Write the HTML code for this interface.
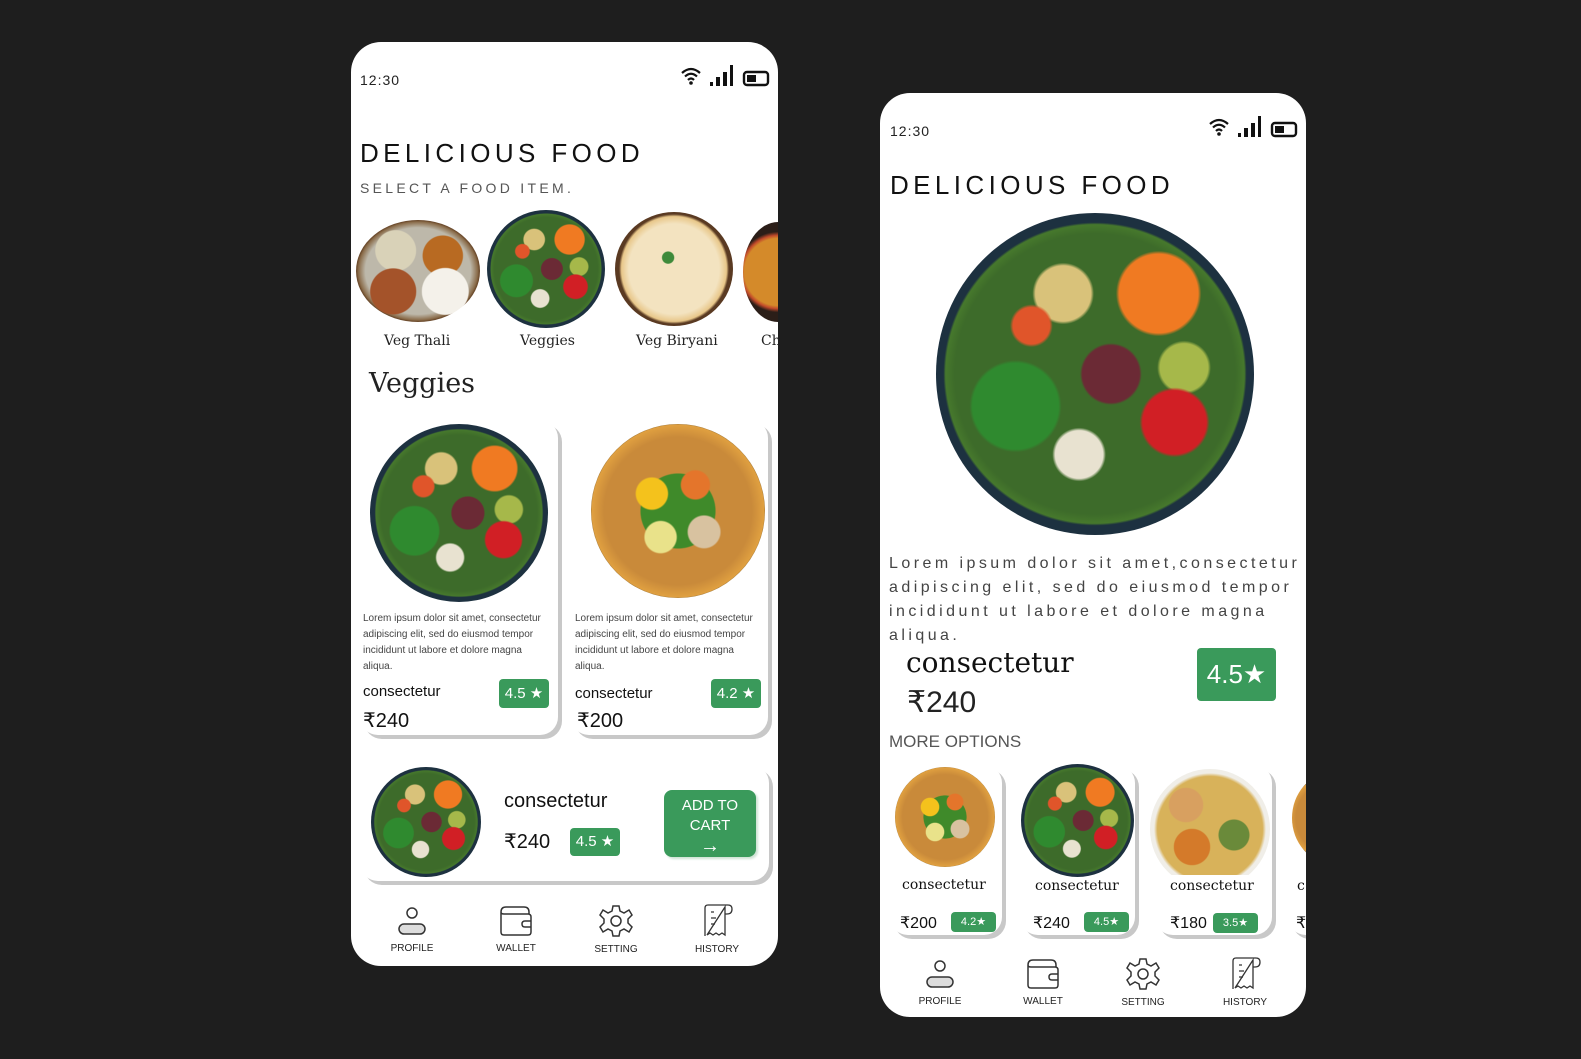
<!DOCTYPE html>
<html><head><meta charset="utf-8"><style>
*{margin:0;padding:0;box-sizing:border-box}
body{width:1581px;height:1059px;background:#1e1e1e;position:relative;overflow:hidden;font-family:"Liberation Sans","DejaVu Sans",sans-serif;color:#111}
.ph{position:absolute;background:#fff;border-radius:30px;overflow:hidden}
.a{position:absolute;white-space:nowrap}
.serif{font-family:"DejaVu Serif","Liberation Serif",serif}
.c{position:absolute;border-radius:50%}
.salad{background:
radial-gradient(circle at 30% 35%,#e0552a 0 6%,transparent 7%),
radial-gradient(circle at 55% 50%,#6b2a35 0 12%,transparent 13%),
radial-gradient(circle at 75% 65%,#d11f25 0 10%,transparent 11%),
radial-gradient(circle at 70% 25%,#f07a22 0 12%,transparent 13%),
radial-gradient(circle at 45% 75%,#e8e2d0 0 8%,transparent 9%),
radial-gradient(circle at 78% 48%,#a6b84a 0 8%,transparent 9%),
radial-gradient(circle at 40% 25%,#d9c27a 0 9%,transparent 10%),
radial-gradient(circle at 25% 60%,#2f8a2f 0 14%,transparent 15%),
radial-gradient(circle,#3d6b2a 0 62%,#46782c 66%,#1d3140 67% 100%)}
.stir{background:
radial-gradient(circle at 35% 40%,#f4c21c 0 10%,transparent 11%),
radial-gradient(circle at 60% 35%,#e4752b 0 9%,transparent 10%),
radial-gradient(circle at 40% 65%,#e9e28a 0 10%,transparent 11%),
radial-gradient(circle at 65% 62%,#d8c2a0 0 10%,transparent 11%),
radial-gradient(circle at 50% 50%,#3f8a2a 0 30%,transparent 31%),
radial-gradient(circle,#c98a3a 0 60%,#e0a040 70%,#2b2b2b 72% 100%)}
.thali{background:
radial-gradient(circle at 72% 70%,#f4f1ea 0 20%,transparent 21%),
radial-gradient(circle at 30% 70%,#a4532a 0 20%,transparent 21%),
radial-gradient(circle at 70% 35%,#b86a22 0 18%,transparent 19%),
radial-gradient(circle at 32% 30%,#d9d2b8 0 18%,transparent 19%),
radial-gradient(ellipse,#bdb8aa 0 60%,#8a6c4a 68%,#6b4a2c 70%)}
.bir{background:
radial-gradient(circle at 45% 40%,#3e8a3a 0 6%,transparent 7%),
radial-gradient(circle,#f3e3c0 0 55%,#e8c78a 64%,#5a3a22 67% 100%)}
.quin{background:
radial-gradient(circle at 30% 30%,#d8a060 0 14%,transparent 15%),
radial-gradient(circle at 70% 55%,#6a8a3a 0 14%,transparent 15%),
radial-gradient(circle at 35% 65%,#d47a2a 0 16%,transparent 17%),
radial-gradient(circle,#d8b25a 0 62%,#f0eee8 66% 100%)}
.noodle{background:radial-gradient(circle,#d48a2a 0 55%,#c24a2a 60%,#2b1e18 66% 100%)}
.card{position:absolute;background:#fff;border-radius:18px;box-shadow:4px 4px 0 #c8c8c8}
.bd{position:absolute;background:#3a9a5b;color:#fff;border-radius:4px;text-align:center}
.nav{position:absolute;width:80px;text-align:center;font-size:10px;color:#222}
.nav svg{display:block;margin:0 auto 6px}
.lor{position:absolute;font-size:10px;line-height:16px;color:#444;white-space:nowrap}
</style></head><body>

<!-- PHONE 1 -->
<div class="ph" style="left:351px;top:42px;width:427px;height:924px">
 <div class="a" style="left:9px;top:30px;font-size:14px;letter-spacing:1px;color:#222">12:30</div>
 <svg class="a" style="left:330px;top:22px" width="92" height="24" viewBox="0 0 92 24">
  <path d="M1 9 Q10 1 19 9" stroke="#111" stroke-width="2.2" fill="none"/><path d="M4 12.5 Q10 7 16 12.5" stroke="#111" stroke-width="2.2" fill="none"/><path d="M7 16 Q10 13 13 16" stroke="#111" stroke-width="2.2" fill="none"/><circle cx="10" cy="19" r="1.8" fill="#111"/>
  <rect x="29" y="18" width="3" height="4" fill="#111"/><rect x="35" y="13" width="4" height="9" fill="#111"/><rect x="42" y="8" width="4" height="14" fill="#111"/><rect x="49" y="1" width="3" height="21" fill="#111"/>
  <rect x="63" y="8" width="24" height="13" rx="3" stroke="#111" stroke-width="2.4" fill="none"/><rect x="66" y="11" width="9" height="7" fill="#111"/>
 </svg>
 <div class="a" style="left:9px;top:96px;font-size:26px;letter-spacing:4.4px;color:#111">DELICIOUS FOOD</div>
 <div class="a" style="left:9px;top:138px;font-size:14px;letter-spacing:3.3px;color:#555">SELECT A FOOD ITEM.</div>

 <div class="c thali" style="left:5px;top:178px;width:124px;height:102px"></div>
 <div class="c salad" style="left:136px;top:168px;width:118px;height:118px"></div>
 <div class="c bir" style="left:264px;top:170px;width:118px;height:114px"></div>
 <div class="c noodle" style="left:392px;top:180px;width:70px;height:100px"></div>
 <div class="a serif" style="left:33px;top:291px;font-size:14px;color:#222">Veg Thali</div>
 <div class="a serif" style="left:169px;top:291px;font-size:14px;color:#222">Veggies</div>
 <div class="a serif" style="left:285px;top:291px;font-size:14px;color:#222">Veg Biryani</div>
 <div class="a serif" style="left:410px;top:291px;font-size:14px;color:#222">Ch</div>
 <div class="a serif" style="left:18px;top:326px;font-size:27px;color:#222">Veggies</div>

 <div class="card" style="left:9px;top:378px;width:198px;height:315px"></div>
 <div class="c salad" style="left:19px;top:382px;width:178px;height:178px"></div>
 <div class="lor" style="left:12px;top:569px">Lorem ipsum dolor sit amet, consectetur<br>adipiscing elit, sed do eiusmod tempor<br>incididunt ut labore et dolore magna<br>aliqua.</div>
 <div class="a" style="left:12px;top:641px;font-size:15px">consectetur</div>
 <div class="a" style="left:12px;top:666px;font-size:20px">₹240</div>
 <div class="bd" style="left:148px;top:637px;width:50px;height:29px;font-size:15px;line-height:29px">4.5 ★</div>

 <div class="card" style="left:220px;top:378px;width:197px;height:315px"></div>
 <div class="c stir" style="left:240px;top:382px;width:174px;height:174px"></div>
 <div class="lor" style="left:224px;top:569px">Lorem ipsum dolor sit amet, consectetur<br>adipiscing elit, sed do eiusmod tempor<br>incididunt ut labore et dolore magna<br>aliqua.</div>
 <div class="a" style="left:224px;top:643px;font-size:15px">consectetur</div>
 <div class="a" style="left:226px;top:666px;font-size:20px">₹200</div>
 <div class="bd" style="left:360px;top:637px;width:50px;height:29px;font-size:15px;line-height:29px">4.2 ★</div>

 <div class="card" style="left:9px;top:723px;width:409px;height:116px"></div>
 <div class="c salad" style="left:20px;top:725px;width:110px;height:110px"></div>
 <div class="a" style="left:153px;top:748px;font-size:20px">consectetur</div>
 <div class="a" style="left:153px;top:787px;font-size:20px">₹240</div>
 <div class="bd" style="left:219px;top:786px;width:50px;height:28px;font-size:15px;line-height:28px">4.5 ★</div>
 <div class="bd" style="left:313px;top:748px;width:92px;height:67px;border-radius:8px;font-size:15px;line-height:20px;padding-top:6px;box-shadow:2px 2px 2px #cfe3d5">ADD TO<br>CART<br><span style="font-size:20px">→</span></div>

 <div class="nav" style="left:21px;top:863px"><svg width="34" height="32" viewBox="0 0 34 32"><circle cx="17" cy="8" r="5" stroke="#333" stroke-width="1.5" fill="none"/><rect x="4" y="19" width="26" height="10" rx="5" fill="#ddd" stroke="#333" stroke-width="1.5"/></svg>PROFILE</div>
 <div class="nav" style="left:125px;top:863px"><svg width="36" height="32" viewBox="0 0 36 32"><path d="M3 7 Q3 2 8 2 H26 Q31 2 31 7 V9 M3 7 V27 Q3 30 6 30 H30 Q33 30 33 27 V12 Q33 9 30 9 H6 Q3 9 3 7" stroke="#333" stroke-width="1.5" fill="none"/><path d="M33 16 H27 Q24 16 24 19 Q24 22 27 22 H33" stroke="#333" stroke-width="1.5" fill="none"/></svg>WALLET</div>
 <div class="nav" style="left:225px;top:862px"><svg width="34" height="34" viewBox="0 0 34 34"><path d="M14 2 H20 L21 7 L25 9 L30 6 L33 11 L29 15 V19 L33 23 L30 28 L25 25 L21 27 L20 32 H14 L13 27 L9 25 L4 28 L1 23 L5 19 V15 L1 11 L4 6 L9 9 L13 7 Z" stroke="#333" stroke-width="1.5" fill="none"/><circle cx="17" cy="17" r="5" stroke="#333" stroke-width="1.5" fill="none"/></svg>SETTING</div>
 <div class="nav" style="left:326px;top:862px"><svg width="34" height="34" viewBox="0 0 34 34"><path d="M5 32 V4 Q5 1 8 1 H28 Q32 1 32 5 Q32 10 27 10 H25 M25 3 V31 L22 29 L19 31 L16 29 L13 31 L10 29 L7 31 Z" stroke="#333" stroke-width="1.3" fill="none"/><path d="M11 8 H14 M11 14 H16 M11 20 H15" stroke="#333" stroke-width="1.3"/></svg>HISTORY</div>
</div>

<!-- PHONE 2 -->
<div class="ph" style="left:880px;top:93px;width:426px;height:924px">
 <div class="a" style="left:10px;top:30px;font-size:14px;letter-spacing:1px;color:#222">12:30</div>
 <svg class="a" style="left:329px;top:22px" width="92" height="24" viewBox="0 0 92 24">
  <path d="M1 9 Q10 1 19 9" stroke="#111" stroke-width="2.2" fill="none"/><path d="M4 12.5 Q10 7 16 12.5" stroke="#111" stroke-width="2.2" fill="none"/><path d="M7 16 Q10 13 13 16" stroke="#111" stroke-width="2.2" fill="none"/><circle cx="10" cy="19" r="1.8" fill="#111"/>
  <rect x="29" y="18" width="3" height="4" fill="#111"/><rect x="35" y="13" width="4" height="9" fill="#111"/><rect x="42" y="8" width="4" height="14" fill="#111"/><rect x="49" y="1" width="3" height="21" fill="#111"/>
  <rect x="63" y="8" width="24" height="13" rx="3" stroke="#111" stroke-width="2.4" fill="none"/><rect x="66" y="11" width="9" height="7" fill="#111"/>
 </svg>
 <div class="a" style="left:10px;top:77px;font-size:26px;letter-spacing:4.4px;color:#111">DELICIOUS FOOD</div>
 <div class="c salad" style="left:56px;top:120px;width:318px;height:322px"></div>
 <div class="a" style="left:9px;top:459px;font-size:16px;line-height:24px;letter-spacing:3.45px;color:#444">Lorem ipsum dolor sit amet,consectetur<br>adipiscing elit, sed do eiusmod tempor<br>incididunt ut labore et dolore magna<br>aliqua.</div>
 <div class="a serif" style="left:26px;top:553px;font-size:28px;color:#111">consectetur</div>
 <div class="a" style="left:27px;top:592px;font-size:30px;color:#222">₹240</div>
 <div class="bd" style="left:317px;top:555px;width:79px;height:53px;font-size:26px;line-height:53px">4.5★</div>
 <div class="a" style="left:9px;top:639px;font-size:17px;color:#555">MORE OPTIONS</div>

 <div class="card" style="left:10px;top:672px;width:112px;height:170px"></div>
 <div class="c stir" style="left:15px;top:674px;width:100px;height:100px"></div>
 <div class="a serif" style="left:22px;top:784px;font-size:14px">consectetur</div>
 <div class="a" style="left:20px;top:820px;font-size:16px">₹200</div>
 <div class="bd" style="left:71px;top:819px;width:45px;height:20px;font-size:11px;line-height:20px">4.2★</div>

 <div class="card" style="left:140px;top:672px;width:115px;height:170px"></div>
 <div class="c salad" style="left:141px;top:671px;width:113px;height:113px"></div>
 <div class="a serif" style="left:155px;top:785px;font-size:14px">consectetur</div>
 <div class="a" style="left:153px;top:820px;font-size:16px">₹240</div>
 <div class="bd" style="left:204px;top:819px;width:45px;height:20px;font-size:11px;line-height:20px">4.5★</div>

 <div class="card" style="left:275px;top:672px;width:117px;height:170px"></div>
 <div class="c quin" style="left:270px;top:676px;width:120px;height:120px;clip-path:inset(0 0 14px 0)"></div>
 <div class="a serif" style="left:290px;top:785px;font-size:14px">consectetur</div>
 <div class="a" style="left:290px;top:820px;font-size:16px">₹180</div>
 <div class="bd" style="left:333px;top:820px;width:45px;height:20px;font-size:11px;line-height:20px">3.5★</div>

 <div class="card" style="left:408px;top:672px;width:40px;height:170px"></div>
 <div class="c stir" style="left:412px;top:680px;width:80px;height:90px"></div>
 <div class="a serif" style="left:417px;top:785px;font-size:14px">c</div>
 <div class="a" style="left:416px;top:820px;font-size:16px">₹</div>

 <div class="nav" style="left:20px;top:865px"><svg width="34" height="32" viewBox="0 0 34 32"><circle cx="17" cy="8" r="5" stroke="#333" stroke-width="1.5" fill="none"/><rect x="4" y="19" width="26" height="10" rx="5" fill="#ddd" stroke="#333" stroke-width="1.5"/></svg>PROFILE</div>
 <div class="nav" style="left:123px;top:865px"><svg width="36" height="32" viewBox="0 0 36 32"><path d="M3 7 Q3 2 8 2 H26 Q31 2 31 7 V9 M3 7 V27 Q3 30 6 30 H30 Q33 30 33 27 V12 Q33 9 30 9 H6 Q3 9 3 7" stroke="#333" stroke-width="1.5" fill="none"/><path d="M33 16 H27 Q24 16 24 19 Q24 22 27 22 H33" stroke="#333" stroke-width="1.5" fill="none"/></svg>WALLET</div>
 <div class="nav" style="left:223px;top:864px"><svg width="34" height="34" viewBox="0 0 34 34"><path d="M14 2 H20 L21 7 L25 9 L30 6 L33 11 L29 15 V19 L33 23 L30 28 L25 25 L21 27 L20 32 H14 L13 27 L9 25 L4 28 L1 23 L5 19 V15 L1 11 L4 6 L9 9 L13 7 Z" stroke="#333" stroke-width="1.5" fill="none"/><circle cx="17" cy="17" r="5" stroke="#333" stroke-width="1.5" fill="none"/></svg>SETTING</div>
 <div class="nav" style="left:325px;top:864px"><svg width="34" height="34" viewBox="0 0 34 34"><path d="M5 32 V4 Q5 1 8 1 H28 Q32 1 32 5 Q32 10 27 10 H25 M25 3 V31 L22 29 L19 31 L16 29 L13 31 L10 29 L7 31 Z" stroke="#333" stroke-width="1.3" fill="none"/><path d="M11 8 H14 M11 14 H16 M11 20 H15" stroke="#333" stroke-width="1.3"/></svg>HISTORY</div>
</div>
</body></html>
